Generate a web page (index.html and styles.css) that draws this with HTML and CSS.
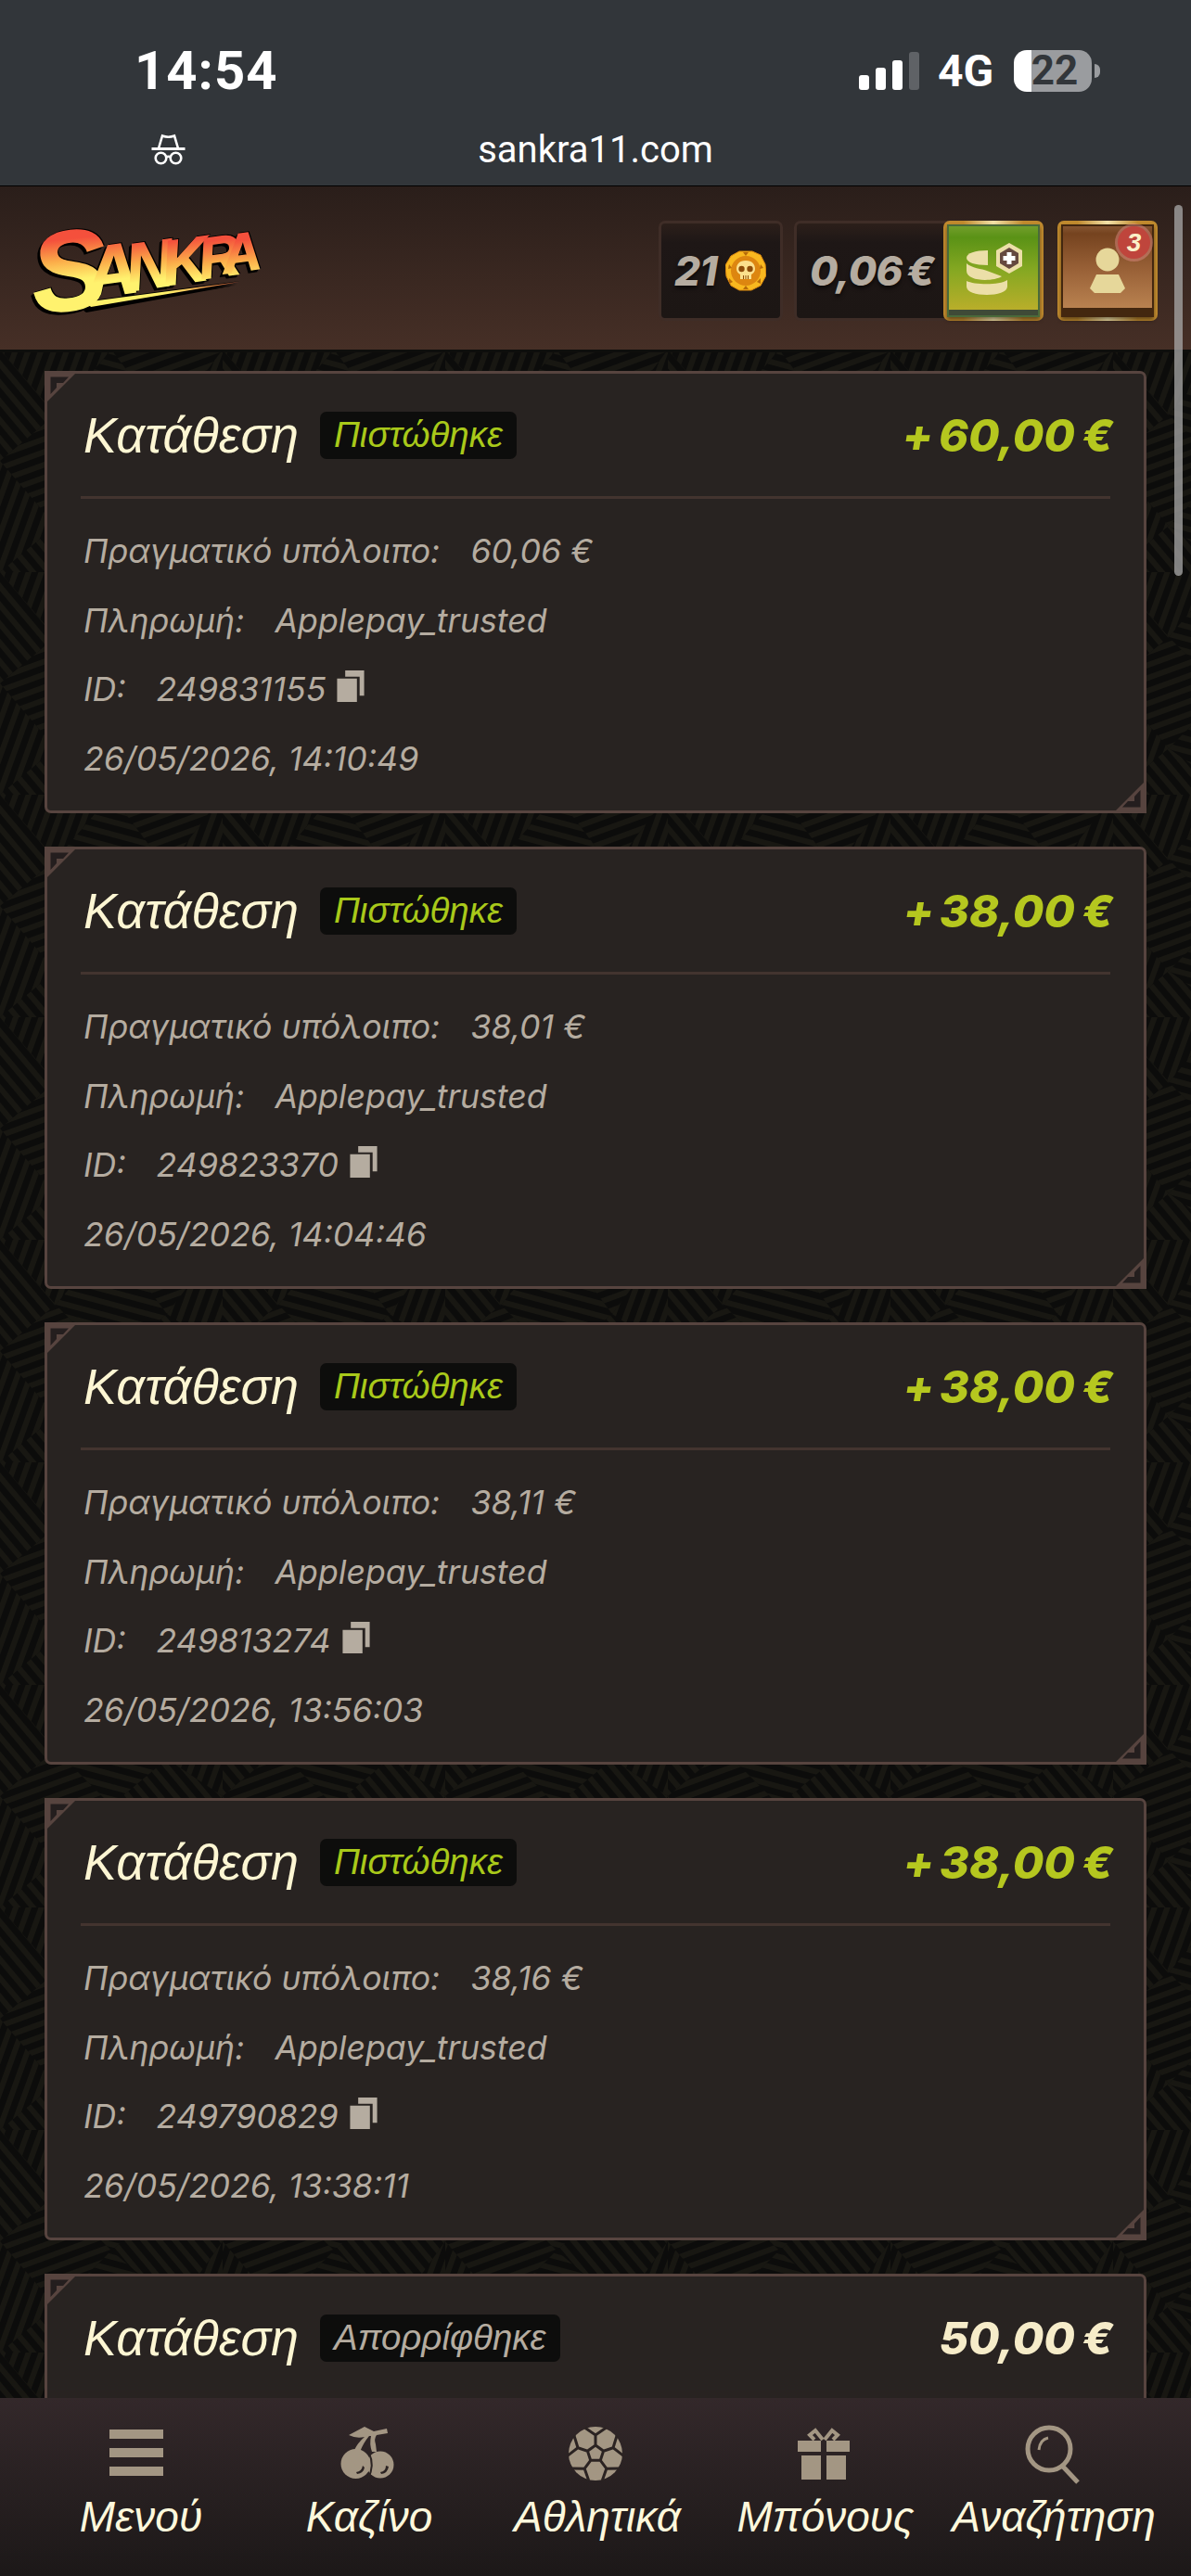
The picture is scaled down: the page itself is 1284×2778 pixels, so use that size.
FILE: index.html
```html
<!DOCTYPE html>
<html lang="en">
<head>
    <meta charset="UTF-8">
    <meta name="viewport" content="width=device-width, initial-scale=1.0">
    <title>Transactions - Sankra</title>
    <link rel="stylesheet" href="styles.css">
</head>
<body>
    <div class="statusbar">
        <div class="status-row">
            <span class="clock">14:54</span>
            <div class="status-icons">
                <div class="signal">
                    <i class="bar-1"></i><i class="bar-2"></i><i class="bar-3"></i><i class="bar-4"></i>
                </div>
                <span class="network">4G</span>
                <div class="battery"><span>22</span></div>
                <i class="battery-tip"></i>
            </div>
        </div>
        <div class="url-row">
            <svg class="incognito" viewBox="0 0 37 34" fill="none" stroke="#fff" stroke-width="2.6">
                <path d="M8 16L12 2.5Q18.5 5 25 2.5L29 16" />
                <path d="M0.5 16.5H36.5" stroke-width="3" />
                <circle cx="10.5" cy="26.5" r="5.8" />
                <circle cx="26.5" cy="26.5" r="5.8" />
                <path d="M16 25.5Q18.5 24 21 25.5" />
            </svg>
            <span class="url">sankra11.com</span>
        </div>
    </div>

    <header class="topbar">
        <svg class="logo" viewBox="0 0 270 100">
            <defs>
                <linearGradient id="logoFill" gradientUnits="userSpaceOnUse" x1="0" y1="6" x2="0" y2="58">
                    <stop offset="0.15" stop-color="#f4503c" />
                    <stop offset="0.6" stop-color="#fbae4a" />
                    <stop offset="1" stop-color="#fff26e" />
                </linearGradient>
                <linearGradient id="swooshFill" gradientUnits="userSpaceOnUse" x1="70" y1="0" x2="230" y2="0">
                    <stop offset="0.5" stop-color="#fff06a" />
                    <stop offset="1" stop-color="#f0603a" />
                </linearGradient>
            </defs>
            <path d="M68 84L228 55L68 78Q62 81 68 84Z" fill="#000" transform="translate(-2 2)" />
            <path d="M68 83L228 56L68 77Q64 80 68 83Z" fill="url(#swooshFill)" />
            <text class="logo-letter" x="8" y="90" font-size="122" transform="rotate(-6 8 90)">S</text>
            <text class="logo-letter" x="66" y="74" font-size="78" transform="rotate(-8 66 74)">A</text>
            <text class="logo-letter" x="109" y="66" font-size="72" transform="rotate(-8 109 66)">N</text>
            <text class="logo-letter" x="148" y="60" font-size="68" transform="rotate(-8 148 60)">K</text>
            <text class="logo-letter" x="187" y="53" font-size="62" transform="rotate(-8 187 53)">R</text>
            <text class="logo-letter" x="212" y="47" font-size="58" transform="rotate(-8 212 47)">A</text>
        </svg>
        <div class="wallet">
            <div class="pill pill-points">
                <span class="pill-value">21</span>
                <svg class="coin" viewBox="0 0 44 44">
                    <path d="M15 1L29 1L38 5L43 15L44 27L38 38L28 43L15 43L6 38L1 28L0 16L6 6Z" fill="#f9b81f" stroke="#d8860f" stroke-width="1" />
                    <circle cx="22" cy="22" r="16" fill="#dd8610" />
                    <path d="M19 2L22 6L25 2ZM38 15L41 19L37 20ZM34 34L38 30L38 36ZM19 42L22 38L25 42ZM4 15L7 19L3 20ZM8 34L4 30L4 36Z" fill="#b66a0a" />
                    <path d="M22 11C15 11 12 15 12 20C12 23 14 25 16 26V31H28V26C30 25 32 23 32 20C32 15 29 11 22 11Z" fill="#fbe08c" />
                    <circle cx="17.5" cy="20" r="3.2" fill="#8d4c08" />
                    <circle cx="26.5" cy="20" r="3.2" fill="#8d4c08" />
                    <path d="M19.5 27V31M22 27V31M24.5 27V31" stroke="#8d4c08" stroke-width="1" />
                </svg>
            </div>
            <div class="pill pill-balance">
                <span class="pill-value">0,06 €</span>
            </div>
            <button class="gold-btn deposit-btn">
                <svg class="btn-icon" viewBox="0 0 100 100">
                    <path d="M44 28V44C30 44 21 41 21 36C21 31 30 28 44 28Z" fill="#ecdfa8" />
                    <path d="M21 42C26 47 38 48 43 50L59 56C50 62 21 62 21 50Z" fill="#ecdfa8" />
                    <path d="M21 61C29 65 56 66 65 60V67C65 73 54 76 43 76C31 76 21 73 21 67Z" fill="#ecdfa8" />
                    <path d="M67 20L81 28V45L67 53L53 45V28Z" fill="#ecdfa8" />
                    <path d="M67 25L77 31V42L67 48L57 42V31Z" fill="#65493f" />
                    <path d="M64.5 30H69.5V34H73.5V39H69.5V43H64.5V39H60.5V34H64.5Z" fill="#fff" />
                </svg>
            </button>
            <button class="gold-btn profile-btn">
                <svg class="btn-icon" viewBox="0 0 100 100">
                    <circle cx="50" cy="38" r="12.5" fill="#e6d79a" />
                    <path d="M38 54H62L69 69L64 74H36L31 69Z" fill="#e6d79a" />
                </svg>
                <span class="badge">3</span>
            </button>
        </div>
    </header>

    <main class="content">
        <article class="card">
            <div class="card-head">
                <h3 class="card-title">Κατάθεση</h3>
                <span class="status status-ok">Πιστώθηκε</span>
                <span class="amount amount-ok"><span class="plus">+</span>60,00 €</span>
            </div>
            <div class="card-rows">
                <div class="row"><span>Πραγματικό υπόλοιπο:</span><span>60,06 €</span></div>
                <div class="row"><span>Πληρωμή:</span><span>Applepay_trusted</span></div>
                <div class="row"><span>ID:</span><span class="row-id">249831155<svg class="copy" viewBox="0 0 30 35"><path d="M9 0H30V28H25V7H9Z" /><path d="M0 9H22V35H0Z" /></svg></span></div>
                <div class="row"><span>26/05/2026, 14:10:49</span></div>
            </div>
        </article>

        <article class="card">
            <div class="card-head">
                <h3 class="card-title">Κατάθεση</h3>
                <span class="status status-ok">Πιστώθηκε</span>
                <span class="amount amount-ok"><span class="plus">+</span>38,00 €</span>
            </div>
            <div class="card-rows">
                <div class="row"><span>Πραγματικό υπόλοιπο:</span><span>38,01 €</span></div>
                <div class="row"><span>Πληρωμή:</span><span>Applepay_trusted</span></div>
                <div class="row"><span>ID:</span><span class="row-id">249823370<svg class="copy" viewBox="0 0 30 35"><path d="M9 0H30V28H25V7H9Z" /><path d="M0 9H22V35H0Z" /></svg></span></div>
                <div class="row"><span>26/05/2026, 14:04:46</span></div>
            </div>
        </article>

        <article class="card">
            <div class="card-head">
                <h3 class="card-title">Κατάθεση</h3>
                <span class="status status-ok">Πιστώθηκε</span>
                <span class="amount amount-ok"><span class="plus">+</span>38,00 €</span>
            </div>
            <div class="card-rows">
                <div class="row"><span>Πραγματικό υπόλοιπο:</span><span>38,11 €</span></div>
                <div class="row"><span>Πληρωμή:</span><span>Applepay_trusted</span></div>
                <div class="row"><span>ID:</span><span class="row-id">249813274<svg class="copy" viewBox="0 0 30 35"><path d="M9 0H30V28H25V7H9Z" /><path d="M0 9H22V35H0Z" /></svg></span></div>
                <div class="row"><span>26/05/2026, 13:56:03</span></div>
            </div>
        </article>

        <article class="card">
            <div class="card-head">
                <h3 class="card-title">Κατάθεση</h3>
                <span class="status status-ok">Πιστώθηκε</span>
                <span class="amount amount-ok"><span class="plus">+</span>38,00 €</span>
            </div>
            <div class="card-rows">
                <div class="row"><span>Πραγματικό υπόλοιπο:</span><span>38,16 €</span></div>
                <div class="row"><span>Πληρωμή:</span><span>Applepay_trusted</span></div>
                <div class="row"><span>ID:</span><span class="row-id">249790829<svg class="copy" viewBox="0 0 30 35"><path d="M9 0H30V28H25V7H9Z" /><path d="M0 9H22V35H0Z" /></svg></span></div>
                <div class="row"><span>26/05/2026, 13:38:11</span></div>
            </div>
        </article>

        <article class="card">
            <div class="card-head">
                <h3 class="card-title">Κατάθεση</h3>
                <span class="status status-rejected">Απορρίφθηκε</span>
                <span class="amount">50,00 €</span>
            </div>
        </article>
    </main>

    <div class="scrollbar"></div>

    <nav class="bottom-nav">
        <a class="nav-item">
            <svg class="nav-icon" viewBox="0 0 60 60"><path d="M-2 4H56V14H-2ZM-2 24H56V34H-2ZM-2 44H56V54H-2Z" /></svg>
            <span>Μενού</span>
        </a>
        <a class="nav-item">
            <svg class="nav-icon" viewBox="0 0 60 60">
                <path d="M10 10L27 1L37 6L51 3L52 8L40 10Q37 14 39 20L40 28L35 28Q32 20 34 11L32 11Q26 18 22 28L16 26Q20 18 27 12Q18 14 10 10Z" />
                <circle cx="17.5" cy="41" r="16" />
                <circle cx="44" cy="42" r="14.5" />
                <path d="M32 30Q38 42 31 57" class="nav-cut" fill="none" stroke-width="2" />
                <path d="M18 50Q24 49 25 43L27 45Q26 51 19 52Z M44 50Q50 49 50 43L53 44Q52 51 45 52Z" class="nav-cut-fill" />
            </svg>
            <span>Καζίνο</span>
        </a>
        <a class="nav-item">
            <svg class="nav-icon" viewBox="0 0 60 60">
                <circle cx="30" cy="30" r="29" />
                <path class="nav-cut" fill="none" stroke-width="3" d="M30 21L38.6 27.2L35.3 37.3H24.7L21.4 27.2ZM30 21V10M38.6 27.2L49 23.8M35.3 37.3L41.8 46.2M24.7 37.3L18.2 46.2M21.4 27.2L11 23.8M18.8 2.2L30 10L41.2 2.2M53 10.7L49 23.8L59.9 32.1M55.4 45.9L41.8 46.2L37.3 59.1M22.7 59.1L18.2 46.2L4.6 45.9M0.1 32.1L11 23.8L7 10.7" />
            </svg>
            <span>Αθλητικά</span>
        </a>
        <a class="nav-item">
            <svg class="nav-icon" viewBox="0 0 60 60">
                <path d="M2 16H27V28H2ZM33 16H58V28H33ZM6 32H27V58H6ZM33 32H54V58H33Z" />
                <path d="M29 15L21 5L15 10L20 15M31 15L39 5L45 10L40 15" fill="none" class="nav-line" stroke-width="4" />
            </svg>
            <span>Μπόνους</span>
        </a>
        <a class="nav-item">
            <svg class="nav-icon" viewBox="0 0 60 60">
                <circle cx="27" cy="25" r="23" class="nav-line" fill="none" stroke-width="5" />
                <path d="M42 44L58 61" class="nav-line" fill="none" stroke-width="5" />
                <path d="M16 26Q17 15 26 13" class="nav-line" fill="none" stroke-width="3" />
            </svg>
            <span>Αναζήτηση</span>
        </a>
    </nav>
</body>
</html>
```

FILE: styles.css
```css
* {
    box-sizing: border-box;
}

html, body {
    margin: 0;
    height: 2778px;
    overflow: hidden;
}

body {
    display: flex;
    flex-direction: column;
    font-family: "Liberation Sans", Arial, sans-serif;
    background-color: #0c0c0b;
    color: #b5aca0;
}

/* phone status bar + url */
.statusbar {
    height: 201px;
    flex: none;
    background-color: #32363a;
    border-bottom: 1px solid #000;
    color: #fff;
}

.status-row {
    height: 126px;
    padding: 26px 98px 0 145px;
    display: flex;
    align-items: center;
    justify-content: space-between;
}

.clock {
    font-family: Roboto, sans-serif;
    font-weight: 700;
    font-size: 58px;
    letter-spacing: 1px;
}

.status-icons {
    display: flex;
    align-items: center;
}

.signal {
    display: flex;
    align-items: flex-end;
    gap: 7px;
    height: 41px;
}

.signal i {
    width: 11px;
    background-color: #fff;
    border-radius: 3px;
}

.bar-1 { height: 16px; }
.bar-2 { height: 24px; }
.bar-3 { height: 32px; }
.signal .bar-4 { height: 41px; background-color: #5f6266; }

.network {
    font-family: Roboto, sans-serif;
    font-weight: 700;
    font-size: 48px;
    margin-left: 20px;
    width: 82px;
}

.battery {
    width: 84px;
    height: 45px;
    border-radius: 14px;
    background: linear-gradient(90deg, #fff 19px, #9a9c9f 19px);
    display: flex;
    align-items: center;
    justify-content: center;
    color: #32363a;
    font-family: Roboto, sans-serif;
    font-weight: 700;
    font-size: 44px;
    padding-left: 4px;
}

.battery-tip {
    width: 6px;
    height: 15px;
    margin-left: 3px;
    background-color: #9a9c9f;
    border-radius: 0 6px 6px 0;
}

.url-row {
    height: 70px;
    display: grid;
    grid-template-columns: 1fr auto 1fr;
    align-items: center;
}

.incognito {
    width: 37px;
    height: 34px;
    margin-left: 163px;
}

.url {
    font-family: Roboto, sans-serif;
    font-size: 40px;
}

/* site header */
.topbar {
    height: 176px;
    flex: none;
    display: flex;
    align-items: center;
    padding: 0 36px 0 30px;
    background: linear-gradient(180deg, #2a1e1a, #462f26);
    box-shadow: 0 3px 0 #0e0e0c;
    position: relative;
    z-index: 2;
}

.logo {
    width: 270px;
    height: 100px;
    margin-top: 18px;
    overflow: visible;
    filter: drop-shadow(-3px 3px 0 #000) drop-shadow(1px -1px 0 #000);
}

.logo-letter {
    font-family: "Liberation Sans", sans-serif;
    font-weight: 700;
    font-style: italic;
    fill: url(#logoFill);
    stroke: url(#logoFill);
    stroke-width: 1.5px;
}

.wallet {
    margin-left: auto;
    margin-top: 6px;
    display: flex;
    height: 108px;
}

.pill {
    height: 108px;
    display: flex;
    align-items: center;
    border: 3px solid #3f2d27;
    border-radius: 7px;
    background: linear-gradient(180deg, #2c1f1a, #1e1716 20%, #1c1614);
}

.pill-points {
    width: 134px;
    padding-left: 14px;
    margin-right: 12px;
}

.pill-balance {
    width: 170px;
    padding-left: 14px;
    margin-right: -9px;
    border-radius: 7px 0 0 7px;
}

.pill-value {
    font-family: Inter, sans-serif;
    font-weight: 800;
    font-style: italic;
    font-size: 44px;
    letter-spacing: -0.8px;
    word-spacing: -4px;
    color: #b5aca0;
    text-shadow: 0 3px 4px rgba(0, 0, 0, 0.6);
    white-space: nowrap;
}

.coin {
    width: 44px;
    height: 44px;
    margin-left: 9px;
}

.gold-btn {
    width: 108px;
    height: 108px;
    padding: 4px;
    border: none;
    border-radius: 7px;
    position: relative;
    background: linear-gradient(90deg, #c08a2e 20%, #f3e2a8 50%, #c08a2e 80%);
}

.deposit-btn {
    z-index: 1;
}

.profile-btn {
    margin-left: 15px;
}

.btn-icon {
    width: 100px;
    height: 100px;
    display: block;
    filter: drop-shadow(0 3px 2px rgba(0, 0, 0, 0.45));
}

.deposit-btn .btn-icon {
    background: linear-gradient(180deg, #76a02e, #5a9216 14%, #86a822 50%, #b9ae2a 92%, #3f4a37 92%);
    outline: 2px solid #4a6a3a;
    outline-offset: -2px;
}

.profile-btn .btn-icon {
    background: linear-gradient(180deg, #8a5a36, #75431f 10%, #9a6238 50%, #b98250 90%, #43270f 90%);
    outline: 2px solid #43270f;
    outline-offset: -2px;
}

.badge {
    position: absolute;
    top: 6px;
    right: 8px;
    width: 35px;
    height: 35px;
    border-radius: 50%;
    background-color: #bf453c;
    box-shadow: 0 0 0 3px rgba(240, 150, 150, 0.4);
    color: #fbf0c8;
    font-weight: 700;
    font-style: italic;
    font-size: 28px;
    line-height: 35px;
    text-align: center;
}

/* transactions */
.content {
    flex: 1;
    min-height: 0;
    overflow: hidden;
    padding: 23px 48px 0;
    display: flex;
    flex-direction: column;
    gap: 36px;
    background-color: #0c0c0b;
    background-image: url("data:image/svg+xml,%3Csvg xmlns='http://www.w3.org/2000/svg' width='240' height='240'%3E%3Cdefs%3E%3Cpattern id='a' width='13' height='13' patternUnits='userSpaceOnUse' patternTransform='rotate(20)'%3E%3Crect width='6' height='13' fill='%23181712'/%3E%3C/pattern%3E%3Cpattern id='b' width='13' height='13' patternUnits='userSpaceOnUse' patternTransform='rotate(-40)'%3E%3Crect width='6' height='13' fill='%23181712'/%3E%3C/pattern%3E%3Cpattern id='c' width='13' height='13' patternUnits='userSpaceOnUse' patternTransform='rotate(70)'%3E%3Crect width='6' height='13' fill='%23181712'/%3E%3C/pattern%3E%3Cpattern id='d' width='13' height='13' patternUnits='userSpaceOnUse' patternTransform='rotate(-75)'%3E%3Crect width='6' height='13' fill='%23181712'/%3E%3C/pattern%3E%3C/defs%3E%3Cpolygon fill='url(%23a)' points='0,0 120,0 60,70'/%3E%3Cpolygon fill='url(%23b)' points='0,0 60,70 0,120'/%3E%3Cpolygon fill='url(%23c)' points='120,0 240,0 180,80'/%3E%3Cpolygon fill='url(%23d)' points='120,0 180,80 120,130 60,70'/%3E%3Cpolygon fill='url(%23a)' points='240,0 240,120 180,80'/%3E%3Cpolygon fill='url(%23c)' points='0,120 60,70 120,130 60,190'/%3E%3Cpolygon fill='url(%23b)' points='120,130 180,80 240,120 190,190'/%3E%3Cpolygon fill='url(%23a)' points='0,120 60,190 0,240'/%3E%3Cpolygon fill='url(%23d)' points='60,190 120,130 190,190 130,240'/%3E%3Cpolygon fill='url(%23b)' points='0,240 60,190 130,240'/%3E%3Cpolygon fill='url(%23c)' points='130,240 190,190 240,240'/%3E%3Cpolygon fill='url(%23a)' points='190,190 240,120 240,240'/%3E%3C/svg%3E");
}

.card {
    position: relative;
    flex: none;
    height: 477px;
    border: 3px solid #57443f;
    border-radius: 0 7px 0 7px;
    background-color: #282321;
}

.card::before,
.card::after {
    content: "";
    position: absolute;
    width: 36px;
    height: 36px;
    background-image: url("data:image/svg+xml,%3Csvg xmlns='http://www.w3.org/2000/svg' viewBox='0 0 36 36'%3E%3Cpath d='M36 0V36H0Z' fill='%2357443f'/%3E%3Cpath d='M10 29.5H29.5V11L23 18V23H16Z' fill='%23241e1e'/%3E%3C/svg%3E");
}

.card::before {
    top: -3px;
    left: -3px;
    transform: rotate(180deg);
}

.card::after {
    right: -3px;
    bottom: -3px;
}

.card-head {
    height: 135px;
    margin: 0 36px;
    display: flex;
    align-items: center;
    border-bottom: 3px solid #43342f;
}

.card-title {
    margin: 0;
    font-size: 54px;
    font-weight: 400;
    font-style: italic;
    color: #fdf6d3;
    padding-left: 3px;
}

.status {
    margin-left: 23px;
    height: 51px;
    padding: 0 15px;
    border-radius: 7px;
    background-color: #0d0d0c;
    font-size: 38.5px;
    font-style: italic;
    line-height: 50px;
}

.status-ok {
    color: #a9c91a;
}

.status-rejected {
    color: #b5aca0;
}

.amount {
    margin-left: auto;
    margin-right: -3px;
    font-family: Inter, sans-serif;
    font-weight: 800;
    font-style: italic;
    font-size: 48.5px;
    word-spacing: -3px;
    color: #f6ecc9;
}

.amount-ok {
    color: #b5c71f;
}

.plus {
    margin-right: 6px;
}

.card-rows {
    padding: 19px 39px 0;
}

.row {
    height: 74.5px;
    display: flex;
    align-items: center;
    gap: 33px;
    font-family: Inter, sans-serif;
    font-style: italic;
    font-size: 35.7px;
    color: #b5aca0;
}

.row-id {
    display: flex;
    align-items: center;
}

.copy {
    width: 30px;
    height: 34px;
    margin-left: 12px;
    margin-top: -6px;
    fill: #b5aca0;
}

.scrollbar {
    position: absolute;
    top: 221px;
    left: 1266px;
    width: 9px;
    height: 400px;
    border-radius: 5px;
    background-color: rgba(170, 170, 170, 0.75);
    z-index: 3;
}

/* bottom nav */
.bottom-nav {
    height: 192px;
    flex: none;
    padding: 30px 27px 0;
    display: grid;
    grid-template-columns: repeat(5, 1fr);
    background: linear-gradient(180deg, #33282a, #1c1818);
    position: relative;
    z-index: 2;
}

.nav-item {
    display: flex;
    flex-direction: column;
    align-items: center;
    gap: 12px;
    color: #fdf8dc;
    font-size: 46px;
    font-style: italic;
    line-height: 52px;
    white-space: nowrap;
}

.nav-item span {
    margin-left: 4px;
}

.nav-icon {
    width: 60px;
    height: 60px;
    fill: #a39683;
    overflow: visible;
}

.nav-cut {
    stroke: #2b2322;
}

.nav-cut-fill {
    fill: #2b2322;
}

.nav-line {
    stroke: #a39683;
}
```
